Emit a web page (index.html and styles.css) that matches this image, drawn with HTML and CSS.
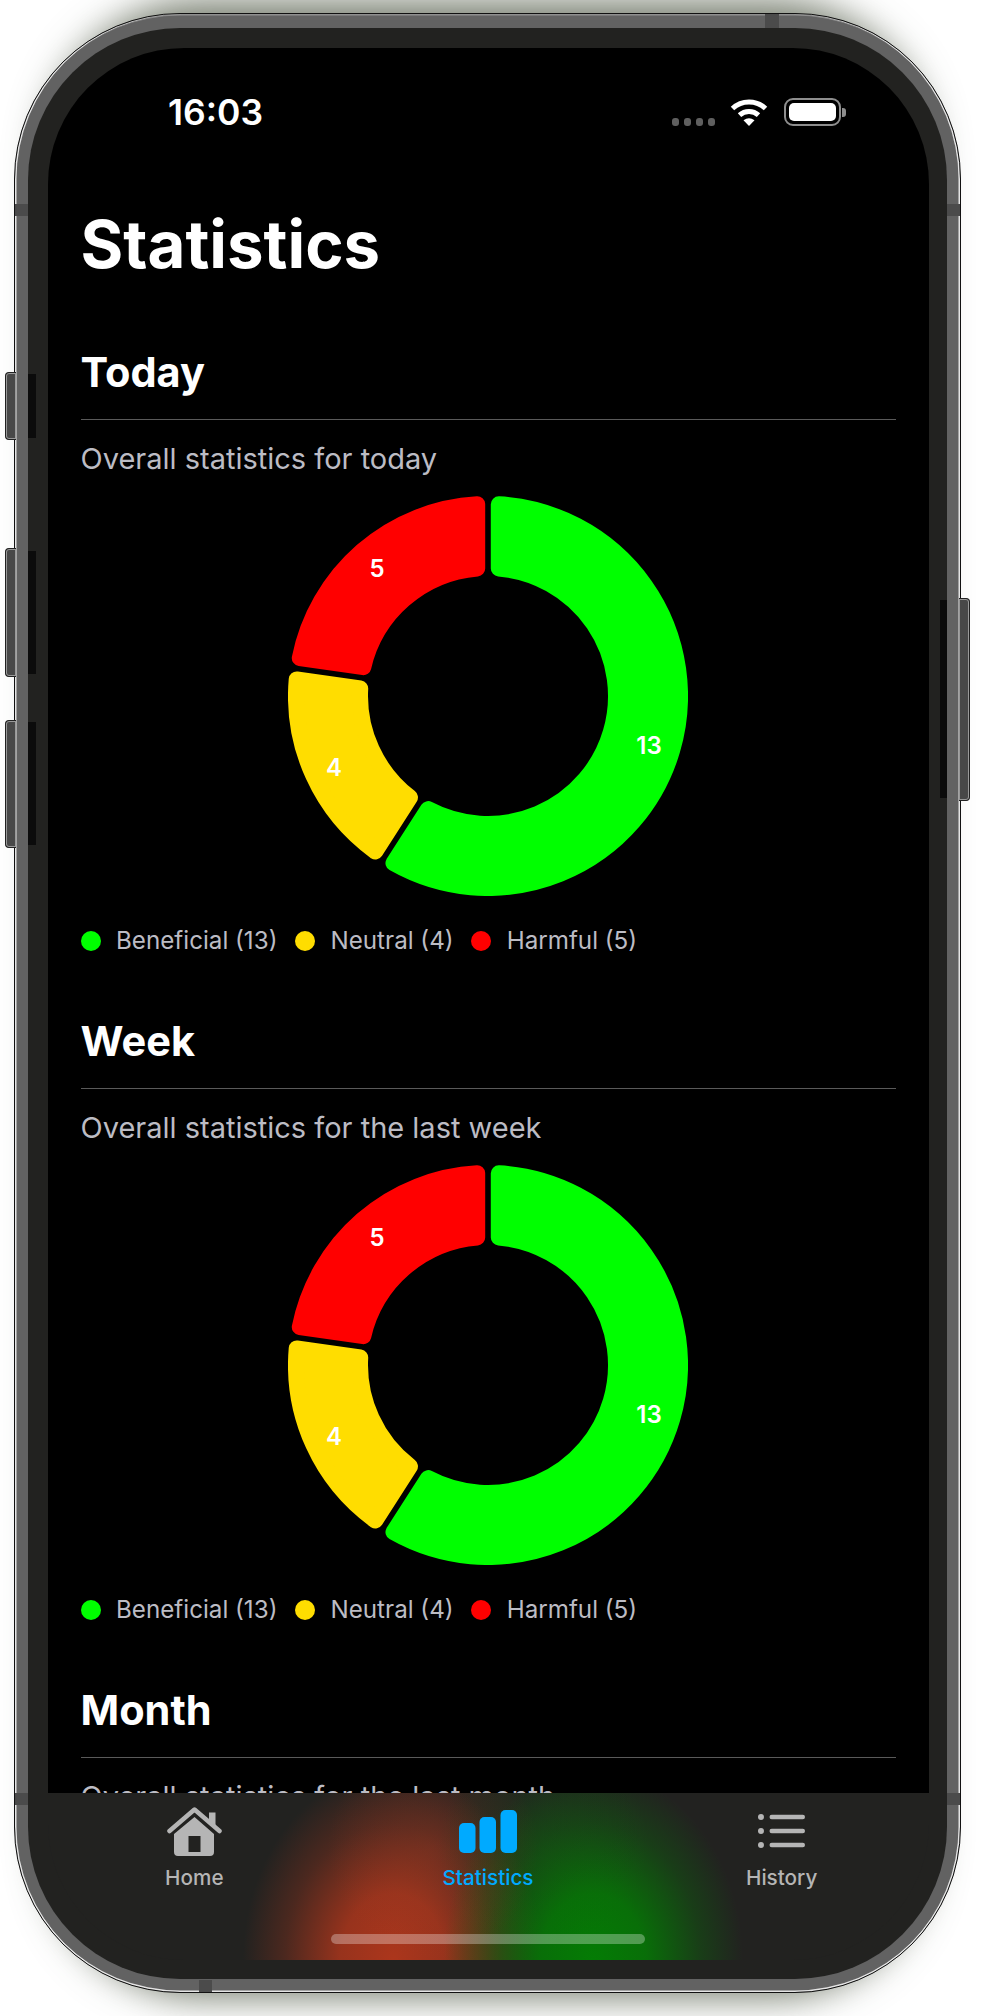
FILE: index.html
```html
<!DOCTYPE html>
<html lang="en">
<head>
  <meta charset="UTF-8" />
  <meta name="viewport" content="width=device-width, initial-scale=1.0"/>
  <title>Statistics</title>
  <link rel="stylesheet" href="styles.css">
</head>
<body>

<div class="phone">
  <span class="side-btn left-btn btn-mute"></span>
  <span class="side-btn left-btn btn-up"></span>
  <span class="side-btn left-btn btn-down"></span>
  <span class="side-btn right-btn"></span>

  <span class="band band-top"></span>
  <span class="band band-bottom"></span>
  <span class="band band-left-1"></span>
  <span class="band band-left-2"></span>
  <span class="band band-right-1"></span>
  <span class="band band-right-2"></span>

  <div class="bezel">
    <span class="strip strip-mute"></span>
    <span class="strip strip-up"></span>
    <span class="strip strip-down"></span>
    <span class="strip strip-power"></span>

    <div class="screen">
      <div class="status-bar">
        <span class="time">16:03</span>
        <div class="status-icons">
          <div class="signal"><i></i><i></i><i></i><i></i></div>
          <svg class="wifi" width="38" height="28" viewBox="0 0 38 28">
            <path d="M2.5 10.5A24 24 0 0 1 35.5 10.5" fill="none" stroke="#fff" stroke-width="5"/>
            <path d="M9.5 17.2A14 14 0 0 1 28.5 17.2" fill="none" stroke="#fff" stroke-width="5"/>
            <path d="M13.5 22.3Q19 18 24.500 22.300L19 28Z" fill="#fff"/>
          </svg>
          <div class="battery"><div class="battery-fill"></div></div>
          <span class="battery-nub"></span>
        </div>
      </div>

      <h1 class="page-title">Statistics</h1>

      <section class="period">
        <h2>Today</h2>
        <p class="period-sub">Overall statistics for today</p>
        <svg class="donut" width="400" height="400" viewBox="0 0 400 400">
          <path class="seg-green" d="M210.8 8.3A192 192 0 1 1 105.46 367.1L140.12 313.13A128 128 0 1 0 210.8 72.46Z"/>
          <path class="seg-yellow" d="M87.32 355.46A192 192 0 0 1 8.72 183.4L72.22 192.54A128 128 0 0 0 121.96 301.45Z"/>
          <path class="seg-red" d="M11.78 162.05A192 192 0 0 1 189.2 8.3L189.2 72.46A128 128 0 0 0 75.3 171.16Z"/>
          <text x="361" y="258">13</text>
          <text x="46" y="280">4</text>
          <text x="89" y="81">5</text>
        </svg>
        <div class="legend">
          <span class="legend-item"><i class="dot-green"></i>Beneficial (13)</span>
          <span class="legend-item"><i class="dot-yellow"></i>Neutral (4)</span>
          <span class="legend-item"><i class="dot-red"></i>Harmful (5)</span>
        </div>
      </section>

      <section class="period">
        <h2>Week</h2>
        <p class="period-sub">Overall statistics for the last week</p>
        <svg class="donut" width="400" height="400" viewBox="0 0 400 400">
          <path class="seg-green" d="M210.8 8.3A192 192 0 1 1 105.46 367.1L140.12 313.13A128 128 0 1 0 210.8 72.46Z"/>
          <path class="seg-yellow" d="M87.32 355.46A192 192 0 0 1 8.72 183.4L72.22 192.54A128 128 0 0 0 121.96 301.45Z"/>
          <path class="seg-red" d="M11.78 162.05A192 192 0 0 1 189.2 8.3L189.2 72.46A128 128 0 0 0 75.3 171.16Z"/>
          <text x="361" y="258">13</text>
          <text x="46" y="280">4</text>
          <text x="89" y="81">5</text>
        </svg>
        <div class="legend">
          <span class="legend-item"><i class="dot-green"></i>Beneficial (13)</span>
          <span class="legend-item"><i class="dot-yellow"></i>Neutral (4)</span>
          <span class="legend-item"><i class="dot-red"></i>Harmful (5)</span>
        </div>
      </section>

      <section class="period">
        <h2>Month</h2>
        <p class="period-sub">Overall statistics for the last month</p>
      </section>

      <nav class="tab-bar">
        <div class="tab">
          <div class="tab-icon">
            <svg width="55" height="49" viewBox="0 0 55 49">
              <path d="M2.500 24L27.500 2.500L52.500 24" fill="none" stroke="#b5b5b5" stroke-width="4.500" stroke-linecap="round" stroke-linejoin="round"/>
              <path d="M42 5.500H48.500V19L42 13Z" fill="#b5b5b5"/>
              <path d="M27.500 10L47 27V45Q47 49 43 49H11Q7 49 7 45V27ZM21.500 29V45H33.500V29Z" fill="#b5b5b5" fill-rule="evenodd"/>
            </svg>
          </div>
          <span class="tab-label">Home</span>
        </div>
        <div class="tab tab-active">
          <div class="tab-icon">
            <svg width="58" height="43" viewBox="0 0 58 43">
              <rect x="0" y="13" width="16.500" height="30" rx="5" fill="#00aaff"/>
              <rect x="20.500" y="7" width="16.500" height="36" rx="5" fill="#00aaff"/>
              <rect x="41.500" y="0" width="16.500" height="43" rx="5" fill="#00aaff"/>
            </svg>
          </div>
          <span class="tab-label">Statistics</span>
        </div>
        <div class="tab">
          <div class="tab-icon">
            <svg width="47" height="34" viewBox="0 0 47 34">
              <circle cx="3" cy="3" r="3" fill="#b5b5b5"/>
              <circle cx="3" cy="17" r="3" fill="#b5b5b5"/>
              <circle cx="3" cy="31" r="3" fill="#b5b5b5"/>
              <rect x="11.500" y="0.800" width="35.500" height="4.400" rx="2.200" fill="#b5b5b5"/>
              <rect x="11.500" y="14.800" width="35.500" height="4.400" rx="2.200" fill="#b5b5b5"/>
              <rect x="11.500" y="28.800" width="35.500" height="4.400" rx="2.200" fill="#b5b5b5"/>
            </svg>
          </div>
          <span class="tab-label">History</span>
        </div>
        <span class="home-indicator"></span>
      </nav>
    </div>
  </div>
</div>

</body>
</html>
```

FILE: styles.css
```css
* {
  box-sizing: border-box;
}

body {
  margin: 0;
  height: 2016px;
  overflow: hidden;
  background: #fff;
  font-family: Inter, "Liberation Sans", sans-serif;
}

.phone {
  position: relative;
  width: 947px;
  height: 1980px;
  margin: 13px 0 0 14px;
  padding: 13.5px 13px 13px 13px;
  background: #626262;
  border: 1.5px solid #111;
  border-radius: 166px;
  box-shadow: inset 1.5px 0 0 #e4e4e4, inset -1.5px 0 0 #e4e4e4, inset 0 -1.5px 0 #e4e4e4, inset 0 1.5px 0 #8f8f8f;
}

/* soft shadow, narrower than the body so it only shows above and below */
.phone::before {
  content: "";
  position: absolute;
  top: 0;
  bottom: 0;
  left: 38px;
  right: 38px;
  z-index: -1;
  border-radius: 150px;
  box-shadow: 0 -4px 36px 10px rgba(70, 80, 60, 0.72);
}

.side-btn {
  position: absolute;
  width: 11px;
  background: #484848;
  border: 1.5px solid #222;
  box-shadow: inset 0 0 0 1px #999;
}

.left-btn {
  left: -10px;
  border-right: none;
  border-radius: 4px 0 0 4px;
}

.btn-mute { top: 358px; height: 68px; }
.btn-up { top: 534px; height: 129px; }
.btn-down { top: 706px; height: 128px; }

.right-btn {
  top: 584px;
  right: -10px;
  height: 203px;
  border-left: none;
  border-radius: 0 4px 4px 0;
}

.band {
  position: absolute;
  background: #4b4b4b;
}

.band-top { top: 0; left: 750px; width: 14px; height: 13.5px; }
.band-bottom { bottom: 0; left: 184px; width: 13px; height: 12px; }
.band-left-1 { left: 0; top: 190px; width: 13px; height: 12px; }
.band-left-2 { left: 0; top: 1779px; width: 13px; height: 12px; }
.band-right-1 { right: 0; top: 190px; width: 13px; height: 12px; }
.band-right-2 { right: 0; top: 1779px; width: 13px; height: 12px; }

.bezel {
  position: relative;
  width: 100%;
  height: 100%;
  padding: 20px 18.5px 18.5px 19.5px;
  background: #222220;
  border-radius: 152px;
}

.strip {
  position: absolute;
  background: #0b0b0b;
}

.strip-mute { left: 0; top: 346px; width: 8px; height: 64px; }
.strip-up { left: 0; top: 523px; width: 8px; height: 123px; }
.strip-down { left: 0; top: 694px; width: 8px; height: 123px; }
.strip-power { right: 0; top: 572px; width: 7px; height: 198px; }

/* bottom of the background matches the bezel so no black edge shows round the tab bar */
.screen {
  position: relative;
  height: 1912px;
  padding: 0 33px;
  overflow: hidden;
  background: linear-gradient(#000 1745px, #222220 1745px);
  border-radius: 136px;
}

.status-bar {
  display: flex;
  align-items: flex-start;
  justify-content: space-between;
  height: 157px;
  padding: 50px 83px 0 120.5px;
  margin: 0 -33px;
}

.time {
  color: #fff;
  font-size: 35.500px;
  font-weight: 600;
  line-height: 30px;
}

.status-icons {
  display: flex;
  align-items: flex-start;
}

.signal {
  display: flex;
  gap: 5px;
  margin: 20px 15px 0 0;
}

.signal i {
  width: 7px;
  height: 8px;
  background: #5f5f5f;
  border-radius: 3px;
}

.battery {
  width: 57px;
  height: 28px;
  margin-left: 16px;
  padding: 3px;
  border: 2px solid #8e8e8e;
  border-radius: 9px;
}

.battery-fill {
  height: 100%;
  background: #fff;
  border-radius: 5px;
}

.battery-nub {
  width: 4px;
  height: 9px;
  margin: 10px 0 0 1px;
  background: #8e8e8e;
  border-radius: 0 3px 3px 0;
}

.page-title {
  margin: 0 0 61.5px;
  color: #fff;
  font-size: 65.300px;
  font-weight: 700;
  line-height: 80px;
}

.period {
  height: 669px;
}

.period h2 {
  height: 74px;
  margin: 0;
  padding-bottom: 14px;
  color: #fff;
  font-size: 41.500px;
  font-weight: 700;
  line-height: 52px;
  border-bottom: 1.5px solid #5a5a5a;
}

.period-sub {
  margin: 20.5px 0 19.5px;
  color: #bcbcc4;
  font-size: 29px;
  font-weight: 400;
  line-height: 36px;
}

.donut {
  display: block;
  margin: 0 auto;
}

.seg-green { fill: #00ff00; stroke: #00ff00; }
.seg-yellow { fill: #ffdd00; stroke: #ffdd00; }
.seg-red { fill: #ff0000; stroke: #ff0000; }

.donut path {
  stroke-width: 16;
  stroke-linejoin: round;
}

.donut text {
  fill: #fff;
  font-size: 24px;
  font-weight: 600;
  text-anchor: middle;
}

.legend {
  display: flex;
  gap: 17.5px;
  margin-top: 29px;
}

.legend-item {
  display: flex;
  align-items: center;
  gap: 15.5px;
  color: #bcbcc4;
  font-size: 24.200px;
  line-height: 32px;
}

.legend-item i {
  width: 20px;
  height: 20px;
  border-radius: 50%;
}

.dot-green { background: #00ff00; }
.dot-yellow { background: #ffdd00; }
.dot-red { background: #ff0000; }

.tab-bar {
  position: absolute;
  left: 0;
  right: 0;
  bottom: 0;
  display: grid;
  grid-template-columns: repeat(3, 1fr);
  height: 167px;
  padding-top: 14px;
  background-color: #222220;
  background-image:
    radial-gradient(ellipse 105px 110px at 495px 55px, rgba(10, 110, 10, 0.22), rgba(10, 110, 10, 0)),
    radial-gradient(ellipse 105px 110px at 385px 55px, rgba(170, 60, 35, 0.3), rgba(170, 60, 35, 0)),
    radial-gradient(ellipse 150px 190px at 545px 167px, rgba(4, 124, 4, 1), rgba(4, 124, 4, 0.85) 35%, rgba(4, 124, 4, 0.3) 72%, rgba(4, 124, 4, 0)),
    radial-gradient(ellipse 150px 190px at 345px 167px, rgba(172, 54, 28, 1), rgba(172, 54, 28, 0.85) 35%, rgba(172, 54, 28, 0.3) 72%, rgba(172, 54, 28, 0));
}

.tab {
  display: flex;
  flex-direction: column;
  align-items: center;
}

.tab-icon {
  display: flex;
  align-items: center;
  justify-content: center;
  height: 49px;
}

.tab-label {
  margin-top: 8px;
  color: #b5b5b5;
  font-size: 20.700px;
  font-weight: 500;
  line-height: 28px;
}

.tab-active .tab-label {
  color: #00aaff;
}

.home-indicator {
  position: absolute;
  left: 283px;
  bottom: 16px;
  width: 314px;
  height: 10px;
  background: rgba(255, 255, 255, 0.3);
  border-radius: 5px;
}
```
